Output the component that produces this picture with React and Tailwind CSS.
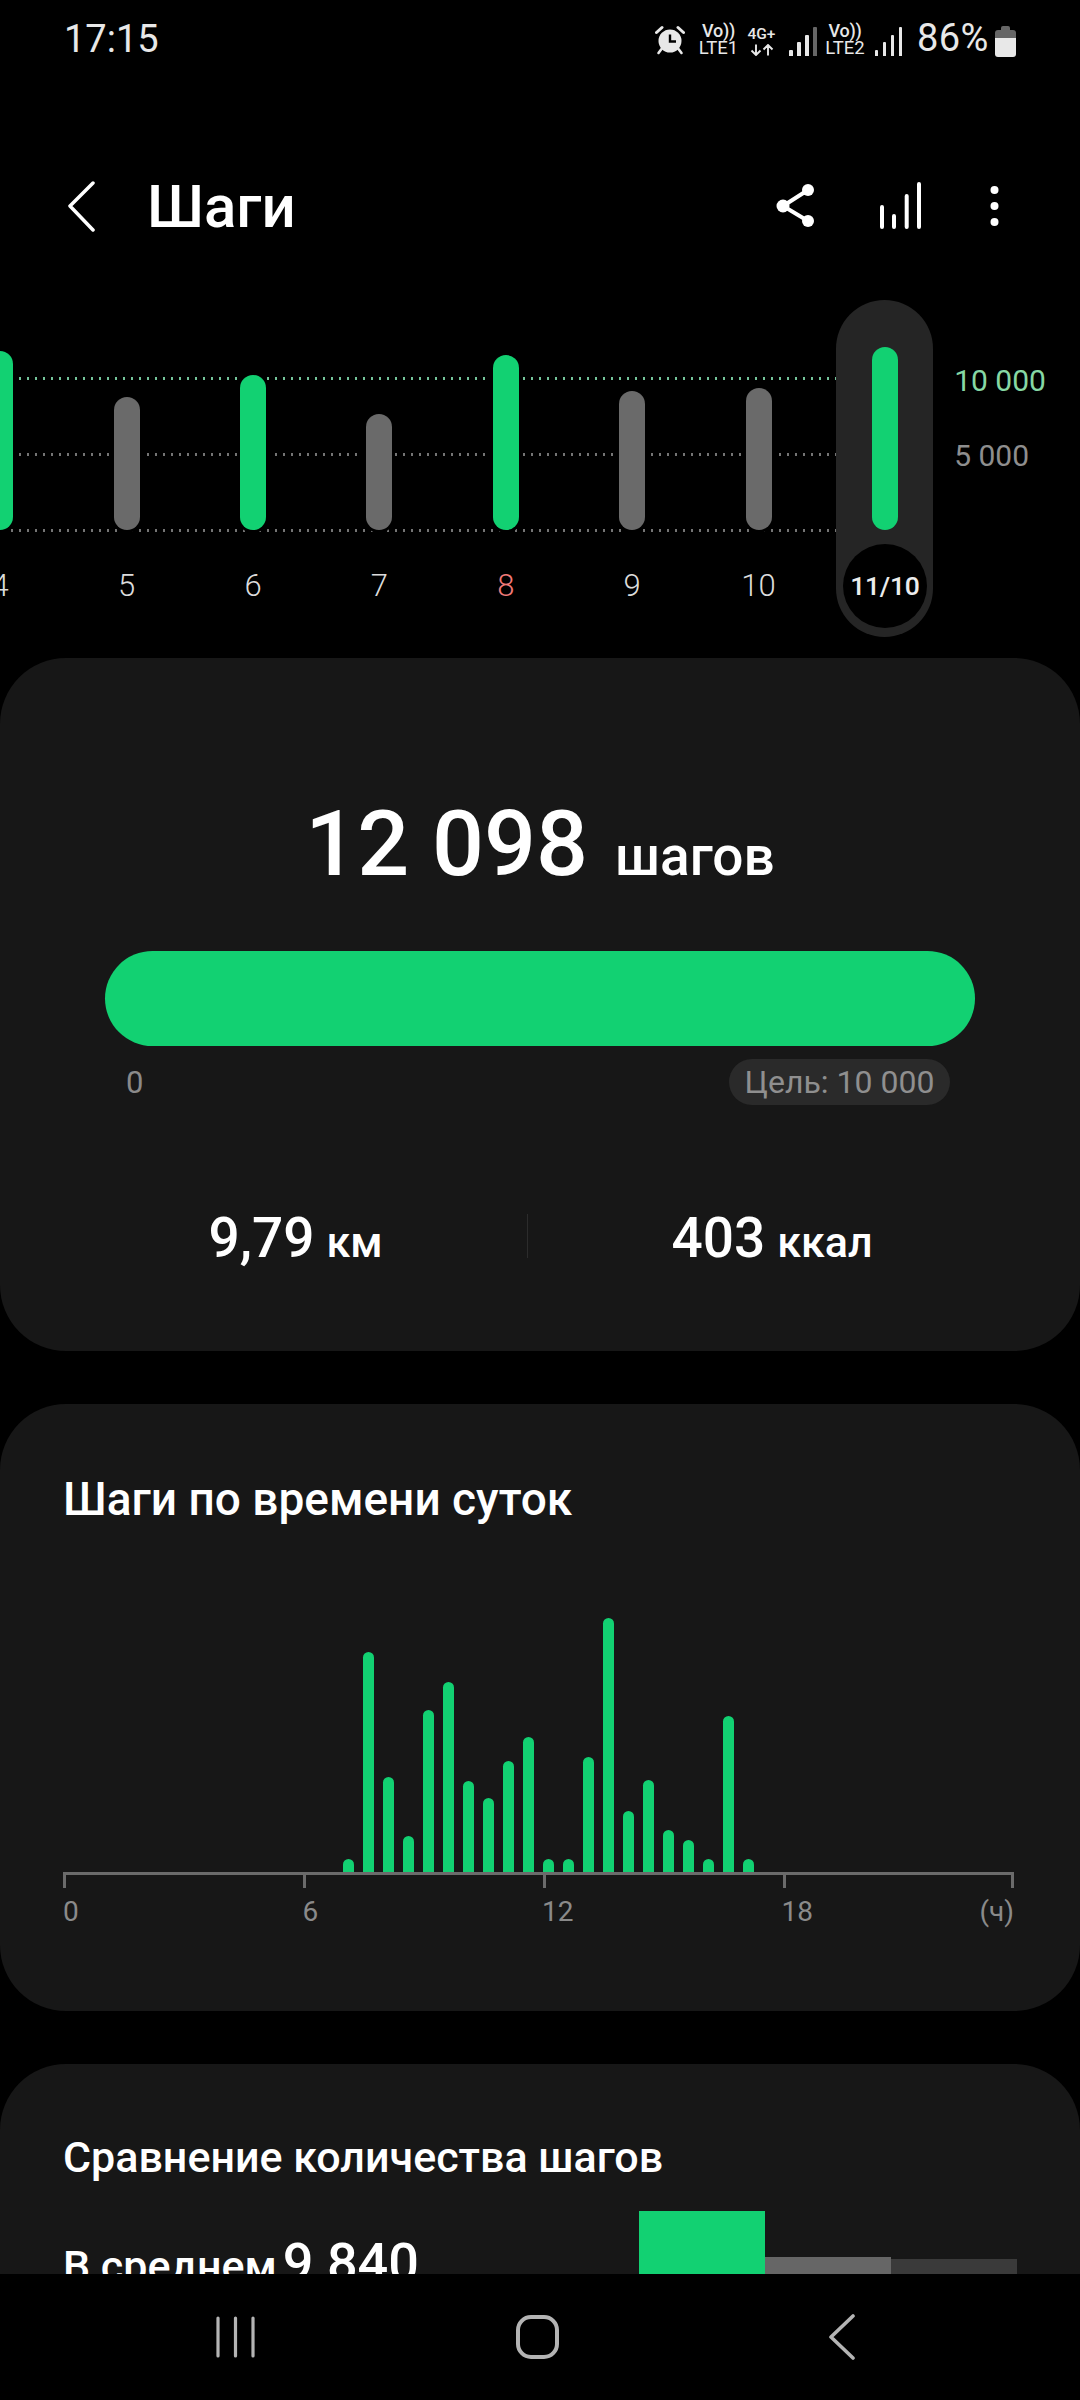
const week = [
  { label: "4", h: 179, green: true },
  { label: "5", h: 133 },
  { label: "6", h: 155, green: true },
  { label: "7", h: 116 },
  { label: "8", h: 175, green: true, red: true },
  { label: "9", h: 139 },
  { label: "10", h: 142 },
];
const hourly = [13, 220, 95, 36, 162, 190, 91, 74, 111, 135, 13, 13, 115, 254, 61, 92, 42, 32, 13, 156, 13];

function Signal({ last }) {
  return (
    <div className="flex items-end gap-[4.5px] h-[29px]">
      <div className="w-[3.5px] h-[6px] rounded-t-[1px] bg-[#e8e8e8]" />
      <div className="w-[3.5px] h-[14px] rounded-t-[1px] bg-[#e8e8e8]" />
      <div className="w-[3.5px] h-[21px] rounded-t-[1px] bg-[#e8e8e8]" />
      <div className={last ? "w-[3.5px] h-[29px] rounded-t-[1px] bg-[#e8e8e8]" : "w-[3.5px] h-[29px] rounded-t-[1px] bg-[#666666]"} />
    </div>
  );
}

function Net({ line, wide }) {
  return (
    <div className={wide ? "w-[41px] flex flex-col items-center text-[#e8e8e8] leading-none" : "w-[39px] flex flex-col items-center text-[#e8e8e8] leading-none"}>
      <span className="text-[18px] h-[17px] font-medium tracking-[-0.2px]">Vo))</span>
      <span className="text-[18.5px] font-normal">{line}</span>
    </div>
  );
}

function StatusBar() {
  return (
    <div className="h-[78px] flex items-start pt-[18px] pl-[64px] pr-[64px] text-[#e8e8e8]">
      <span className="text-[38px] leading-[40px] mt-[1px]">17:15</span>
      <div className="ml-auto flex items-end h-[38px]">
        <svg width="30" height="30" viewBox="0 0 30 30" className="mb-[1px]">
          <circle cx="15" cy="16" r="11.5" fill="#e8e8e8" />
          <path d="M15 9.5V16.5H21" stroke="#000" strokeWidth="2.4" fill="none" />
          <path d="M1.5 7.5L7 2.5M23 2.5L28.5 7.5" stroke="#e8e8e8" strokeWidth="3" strokeLinecap="round" />
          <path d="M6.5 24L3.5 28M23.5 24L26.5 28" stroke="#e8e8e8" strokeWidth="2.6" strokeLinecap="round" />
        </svg>
        <div className="ml-[14px] mb-[-1px]"><Net line="LTE1" /></div>
        <div className="ml-[8px] mb-[-1px] w-[31px] flex flex-col items-center">
          <span className="text-[15.5px] h-[17px] leading-none font-medium">4G+</span>
          <svg width="24" height="12" viewBox="0 0 24 12" fill="none" stroke="#e8e8e8" strokeWidth="1.9" className="mb-[1px]">
            <path d="M6 0.5V11M1.5 6.5L6 11L10.5 6.5M18 11.5V1M13.5 5.5L18 1L22.5 5.5" />
          </svg>
        </div>
        <div className="ml-[12px]"><Signal /></div>
        <div className="ml-[8px] mb-[-1px]"><Net line="LTE2" wide /></div>
        <div className="ml-[9px]"><Signal last /></div>
        <span className="ml-[15px] w-[72px] text-[38px] leading-[38px] mb-[-1px] tracking-[0.4px]">86%</span>
        <div className="ml-[6px] mb-[-1px] flex flex-col items-center w-[21px]">
          <div className="w-[9px] h-[4px] rounded-t-[2px] bg-[#666666]" />
          <div className="w-[21px] h-[8px] rounded-t-[3px] bg-[#666666]" />
          <div className="w-[21px] h-[19px] rounded-b-[3px] bg-[#e8e8e8]" />
        </div>
      </div>
    </div>
  );
}

function Header() {
  return (
    <div className="h-[222px] pt-[34px] pl-[66px] flex items-center text-white">
      <svg width="30" height="52" viewBox="0 0 30 52" fill="none">
        <path d="M27 3L4 26L27 50" stroke="#fff" strokeWidth="3.5" strokeLinecap="round" strokeLinejoin="round" />
      </svg>
      <span className="ml-[51px] text-[60px] leading-none font-medium mt-[1px]">Шаги</span>
      <svg width="44" height="44" viewBox="0 0 44 44" className="ml-auto">
        <path d="M36 6L11 22L36 37" stroke="#fff" strokeWidth="4" fill="none" />
        <circle cx="36" cy="6" r="6" fill="#fff" />
        <circle cx="11" cy="22" r="6.5" fill="#fff" />
        <circle cx="36" cy="37" r="6" fill="#fff" />
      </svg>
      <svg width="50" height="52" viewBox="0 0 50 52" className="ml-[59px]" fill="none" stroke="#fff" strokeWidth="4" strokeLinecap="round">
        <path d="M7 27V47M19 36V47M31.7 16V47M44 4V47" />
      </svg>
      <svg width="20" height="52" viewBox="0 0 20 52" className="ml-[60px] mr-[75px]" fill="#fff">
        <circle cx="9.5" cy="10" r="4" />
        <circle cx="9.5" cy="26" r="4" />
        <circle cx="9.5" cy="42" r="4" />
      </svg>
    </div>
  );
}

function DayColumn({ d }) {
  return (
    <div className="w-[126.4px] shrink-0 flex flex-col items-center">
      <div className="h-[230px] flex items-end">
        <div
          className={d.green ? "w-[26px] rounded-full bg-[#12d172] shadow-[0_0_0_3px_#000]" : "w-[26px] rounded-full bg-[#6a6a6a] shadow-[0_0_0_3px_#000]"}
          style={{ height: d.h }}
        />
      </div>
      <div className={d.red ? "mt-[40px] text-[31px] leading-[32px] font-light text-[#f07a78]" : "mt-[40px] text-[31px] leading-[32px] font-light text-[#dcdcdc]"}>
        {d.label}
      </div>
    </div>
  );
}

function WeekChart() {
  return (
    <div className="relative h-[358px] overflow-hidden">
      <div className="absolute left-[3px] w-[834px] top-[77px] h-[2.5px] bg-[repeating-linear-gradient(90deg,#74c49a_0,#74c49a_2.5px,transparent_2.5px,transparent_8px)]" />
      <div className="absolute left-[3px] w-[834px] top-[153px] h-[2.5px] bg-[repeating-linear-gradient(90deg,#747474_0,#747474_2.5px,transparent_2.5px,transparent_8px)]" />
      <div className="absolute left-[3px] w-[834px] top-[229px] h-[2.5px] bg-[repeating-linear-gradient(90deg,#747474_0,#747474_2.5px,transparent_2.5px,transparent_8px)]" />
      <div className="relative flex ml-[-63px]">
        {week.map((d) => (
          <DayColumn key={d.label} d={d} />
        ))}
        <div className="w-[126.4px] shrink-0 flex justify-center">
          <div className="w-[97px] h-[337px] rounded-full bg-[#252525] flex flex-col items-center pt-[47px]">
            <div className="w-[26px] h-[183px] rounded-full bg-[#12d172]" />
            <div className="mt-[14px] w-[84px] h-[84px] rounded-full bg-black flex items-center justify-center text-[26.5px] font-medium text-[#ececec] tracking-[-0.2px]">
              11/10
            </div>
          </div>
        </div>
        <div className="pl-[6px] text-[30px] leading-none">
          <div className="mt-[66px] text-[#86d8a4]">10 000</div>
          <div className="mt-[45px] text-[#8e8e8e]">5 000</div>
        </div>
      </div>
    </div>
  );
}

function SummaryCard() {
  return (
    <div className="h-[693px] rounded-[66px] bg-[#171717] pt-[140px] text-white">
      <div className="flex justify-center items-baseline leading-none">
        <span className="text-[91.5px] font-medium">12 098</span>
        <span className="ml-[27px] text-[55px] font-medium">шагов</span>
      </div>
      <div className="mt-[61.5px] mx-[105px] h-[95px] rounded-full bg-[#12d172]" />
      <div className="mt-[13px] ml-[126px] mr-[130px] flex justify-between items-center">
        <span className="text-[31px] leading-none text-[#8a8a8a]">0</span>
        <span className="h-[46px] w-[221px] rounded-full bg-[#2a2a2a] flex items-center justify-center text-[32px] text-[#8f8f8f]">Цель: 10 000</span>
      </div>
      <div className="mt-[106px] mx-[64px] grid grid-cols-[463px_1px_1fr] leading-none">
        <div className="flex justify-center items-baseline font-medium">
          <span className="text-[55px]">9,79</span>
          <span className="ml-[12px] text-[43px]">км</span>
        </div>
        <div className="h-[44px] mt-[3px] bg-[#2c2c2c]" />
        <div className="flex justify-center items-baseline font-medium">
          <span className="text-[55px]">403</span>
          <span className="ml-[12px] text-[43px]">ккал</span>
        </div>
      </div>
    </div>
  );
}

function HourlyCard() {
  return (
    <div className="mt-[53px] h-[607px] rounded-[66px] bg-[#171717] pt-[72px] px-[63px]">
      <div className="text-[46px] leading-none font-medium text-white h-[47px]">Шаги по времени суток</div>
      <div className="h-[349px] flex items-end gap-[9.5px] pl-[280px]">
        {hourly.map((h, i) => (
          <div key={i} className="w-[10.5px] rounded-t-full bg-[#12d172]" style={{ height: h }} />
        ))}
      </div>
      <div className="h-[16px] border-t-[3px] border-[#6b6b6b] flex w-[951px]">
        <div className="w-[240px] h-[13px] border-l-[3px] border-[#6b6b6b]" />
        <div className="w-[240px] h-[13px] border-l-[3px] border-[#6b6b6b]" />
        <div className="w-[240px] h-[13px] border-l-[3px] border-[#6b6b6b]" />
        <div className="flex-1 h-[13px] border-x-[3px] border-[#6b6b6b]" />
      </div>
      <div className="mt-[10px] flex w-[951px] text-[28px] leading-none text-[#8a8a8a]">
        <div className="w-[239.5px]">0</div>
        <div className="w-[239.5px]">6</div>
        <div className="w-[239.5px]">12</div>
        <div className="flex-1 flex justify-between">
          <span>18</span>
          <span>(ч)</span>
        </div>
      </div>
    </div>
  );
}

function CompareCard() {
  return (
    <div className="mt-[53px] rounded-t-[66px] bg-[#171717] pt-[72px] pl-[63px] pr-[63px] text-white h-[336px]">
      <div className="text-[43px] leading-none font-medium h-[43px]">Сравнение количества шагов</div>
      <div className="mt-[32px] flex justify-between">
        <div className="mt-[25px] flex items-baseline font-medium leading-none">
          <span className="text-[43px]">В среднем</span>
          <span className="ml-[6px] text-[54px]">9 840</span>
        </div>
        <div className="flex items-end h-[100px]">
          <div className="w-[126px] h-[100px] bg-[#12d172]" />
          <div className="w-[126px] h-[54px] bg-[#666666]" />
          <div className="w-[126px] h-[52px] bg-[#3a3a3a]" />
        </div>
      </div>
    </div>
  );
}

function NavBar() {
  return (
    <div className="absolute left-0 bottom-0 w-full h-[126px] bg-black flex items-center pl-[214px]">
      <svg width="44" height="44" viewBox="0 0 44 44" fill="none" stroke="#b4b4b4" strokeWidth="3.2" strokeLinecap="round">
        <path d="M4 3V41M21.5 3V41M39 3V41" />
      </svg>
      <svg width="44" height="44" viewBox="0 0 44 44" fill="none" className="ml-[258px]">
        <rect x="2" y="2" width="39" height="40" rx="13" stroke="#b4b4b4" strokeWidth="4" />
      </svg>
      <svg width="30" height="46" viewBox="0 0 30 46" fill="none" className="ml-[268px]">
        <path d="M25 2L3 23L25 44" stroke="#b4b4b4" strokeWidth="3.6" strokeLinecap="round" strokeLinejoin="round" />
      </svg>
    </div>
  );
}

export default function App() {
  return (
    <div className="relative w-[1080px] h-[2400px] overflow-hidden bg-black font-['Roboto',sans-serif]">
      <StatusBar />
      <Header />
      <WeekChart />
      <SummaryCard />
      <HourlyCard />
      <CompareCard />
      <NavBar />
    </div>
  );
}
